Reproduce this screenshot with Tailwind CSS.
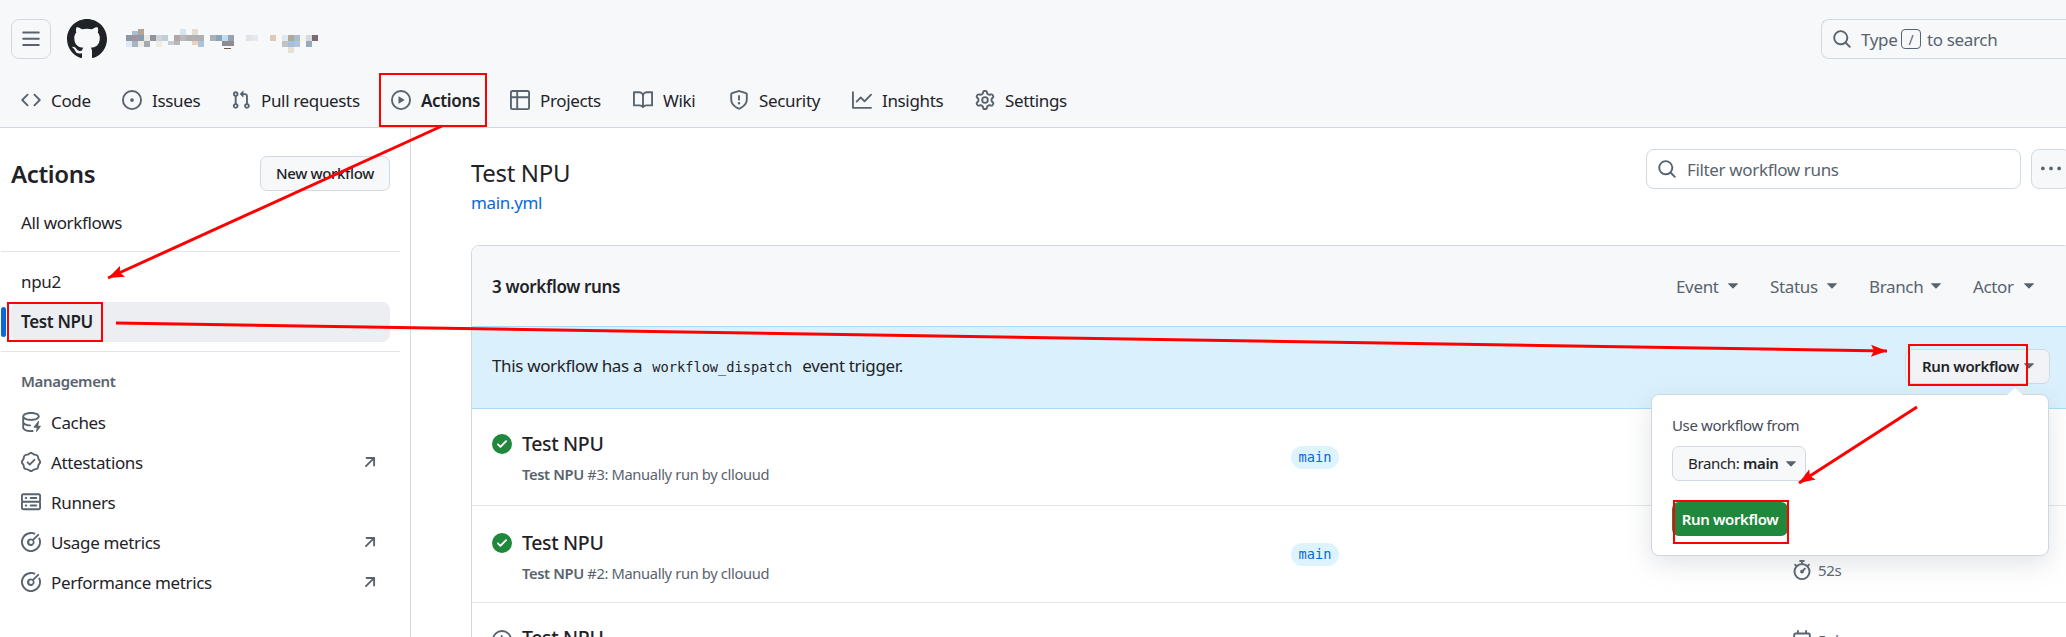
<!DOCTYPE html>
<html lang="en">
<head>
  <meta charset="UTF-8" />
  <title>Actions</title>
  <script src="https://cdn.jsdelivr.net/npm/@tailwindcss/browser@4"></script>
</head>
<body class="bg-white text-[#1f2328] font-['Noto_Sans',sans-serif] text-[17px] leading-[25px] tracking-[-0.35px]">
  <svg class="hidden">
    <symbol id="i-code" viewBox="0 0 16 16"><path d="m11.28 3.22 4.25 4.25a.75.75 0 0 1 0 1.06l-4.25 4.25a.749.749 0 0 1-1.275-.326.749.749 0 0 1 .215-.734L13.94 8l-3.72-3.72a.749.749 0 0 1 .326-1.275.749.749 0 0 1 .734.215Zm-6.56 0a.751.751 0 0 1 1.042.018.751.751 0 0 1 .018 1.042L2.06 8l3.72 3.72a.749.749 0 0 1-.326 1.275.749.749 0 0 1-.734-.215L.47 8.53a.75.75 0 0 1 0-1.06Z"/></symbol>
    <symbol id="i-issue" viewBox="0 0 16 16"><path d="M8 9.5a1.5 1.5 0 1 0 0-3 1.5 1.5 0 0 0 0 3Z"/><path d="M8 0a8 8 0 1 1 0 16A8 8 0 0 1 8 0ZM1.5 8a6.5 6.5 0 1 0 13 0 6.5 6.5 0 0 0-13 0Z"/></symbol>
    <symbol id="i-pr" viewBox="0 0 16 16"><path d="M1.5 3.25a2.25 2.25 0 1 1 3 2.122v5.256a2.251 2.251 0 1 1-1.5 0V5.372A2.25 2.25 0 0 1 1.5 3.25Zm5.677-.177L9.573.677A.25.25 0 0 1 10 .854V2.5h1A2.5 2.5 0 0 1 13.5 5v5.628a2.251 2.251 0 1 1-1.5 0V5a1 1 0 0 0-1-1h-1v1.646a.25.25 0 0 1-.427.177L7.177 3.427a.25.25 0 0 1 0-.354ZM3.75 2.5a.75.75 0 1 0 0 1.5.75.75 0 0 0 0-1.5Zm0 9.5a.75.75 0 1 0 0 1.5.75.75 0 0 0 0-1.5Zm8.25.75a.75.75 0 1 0 1.5 0 .75.75 0 0 0-1.5 0Z"/></symbol>
    <symbol id="i-play" viewBox="0 0 16 16"><path d="M8 0a8 8 0 1 1 0 16A8 8 0 0 1 8 0ZM1.5 8a6.5 6.5 0 1 0 13 0 6.5 6.5 0 0 0-13 0Zm4.879-2.773 4.264 2.559a.25.25 0 0 1 0 .428l-4.264 2.559A.25.25 0 0 1 6 10.559V5.442a.25.25 0 0 1 .379-.215Z"/></symbol>
    <symbol id="i-table" viewBox="0 0 16 16"><path d="M0 1.75C0 .784.784 0 1.75 0h12.5C15.216 0 16 .784 16 1.75v12.5A1.75 1.75 0 0 1 14.25 16H1.75A1.75 1.75 0 0 1 0 14.25ZM6.5 6.5v8h7.75a.25.25 0 0 0 .25-.25V6.5Zm8-1.5V1.75a.25.25 0 0 0-.25-.25H6.5V5Zm-13 1.5v7.75c0 .138.112.25.25.25H5v-8ZM5 5V1.5H1.75a.25.25 0 0 0-.25.25V5Z"/></symbol>
    <symbol id="i-book" viewBox="0 0 16 16"><path d="M0 1.75A.75.75 0 0 1 .75 1h4.253c1.227 0 2.317.59 3 1.501A3.743 3.743 0 0 1 11.006 1h4.245a.75.75 0 0 1 .75.75v10.5a.75.75 0 0 1-.75.75h-4.507a2.25 2.25 0 0 0-1.591.659l-.622.621a.75.75 0 0 1-1.06 0l-.622-.621A2.25 2.25 0 0 0 5.258 13H.75a.75.75 0 0 1-.75-.75Zm7.251 10.324.004-5.073-.002-2.253A2.25 2.25 0 0 0 5.003 2.5H1.5v9h3.757a3.75 3.75 0 0 1 1.994.574ZM8.755 4.75l-.004 7.322a3.752 3.752 0 0 1 1.992-.572H14.5v-9h-3.495a2.25 2.25 0 0 0-2.25 2.25Z"/></symbol>
    <symbol id="i-shield" viewBox="0 0 16 16"><path d="M7.467.133a1.748 1.748 0 0 1 1.066 0l5.25 1.68A1.75 1.75 0 0 1 15 3.48V7c0 1.566-.32 3.182-1.303 4.682-.983 1.498-2.585 2.813-5.032 3.855a1.697 1.697 0 0 1-1.33 0c-2.447-1.042-4.049-2.357-5.032-3.855C1.32 10.182 1 8.566 1 7V3.48a1.75 1.75 0 0 1 1.217-1.667Zm.61 1.429a.25.25 0 0 0-.153 0l-5.25 1.68a.25.25 0 0 0-.174.238V7c0 1.358.275 2.666 1.057 3.86.784 1.194 2.121 2.34 4.366 3.297a.196.196 0 0 0 .154 0c2.245-.956 3.582-2.104 4.366-3.298C13.225 9.666 13.5 8.36 13.5 7V3.48a.251.251 0 0 0-.174-.237l-5.25-1.68ZM8.75 4.75v3a.75.75 0 0 1-1.5 0v-3a.75.75 0 0 1 1.5 0ZM9 10.5a1 1 0 1 1-2 0 1 1 0 0 1 2 0Z"/></symbol>
    <symbol id="i-graph" viewBox="0 0 16 16"><path d="M1.5 1.75V13.5h13.75a.75.75 0 0 1 0 1.5H.75a.75.75 0 0 1-.75-.75V1.75a.75.75 0 0 1 1.5 0Zm14.28 2.53-5.25 5.25a.75.75 0 0 1-1.06 0L7 7.06 4.28 9.78a.751.751 0 0 1-1.042-.018.751.751 0 0 1-.018-1.042l3.25-3.25a.75.75 0 0 1 1.06 0L10 7.94l4.72-4.72a.751.751 0 0 1 1.042.018.751.751 0 0 1 .018 1.042Z"/></symbol>
    <symbol id="i-gear" viewBox="0 0 16 16"><path d="M8 0a8.2 8.2 0 0 1 .701.031C9.444.095 9.99.645 10.16 1.29l.288 1.107c.018.066.079.158.212.224.231.114.454.243.668.386.123.082.233.09.299.071l1.103-.303c.644-.176 1.392.021 1.82.63.27.385.506.792.704 1.218.315.675.111 1.422-.364 1.891l-.814.806c-.049.048-.098.147-.088.294.016.257.016.515 0 .772-.01.147.038.246.088.294l.814.806c.475.469.679 1.216.364 1.891a7.977 7.977 0 0 1-.704 1.217c-.428.61-1.176.807-1.82.63l-1.102-.302c-.067-.019-.177-.011-.3.071a5.909 5.909 0 0 1-.668.386c-.133.066-.194.158-.211.224l-.29 1.106c-.168.646-.715 1.196-1.458 1.26a8.006 8.006 0 0 1-1.402 0c-.743-.064-1.289-.614-1.458-1.26l-.289-1.106c-.018-.066-.079-.158-.212-.224a5.738 5.738 0 0 1-.668-.386c-.123-.082-.233-.09-.299-.071l-1.103.303c-.644.176-1.392-.021-1.82-.63a8.12 8.12 0 0 1-.704-1.218c-.315-.675-.111-1.422.363-1.891l.815-.806c.05-.048.098-.147.088-.294a6.214 6.214 0 0 1 0-.772c.01-.147-.038-.246-.088-.294l-.815-.806C.635 6.045.431 5.298.746 4.623a7.92 7.92 0 0 1 .704-1.217c.428-.61 1.176-.807 1.82-.63l1.102.302c.067.019.177.011.3-.071.214-.143.437-.272.668-.386.133-.066.194-.158.211-.224l.29-1.106C6.009.645 6.556.095 7.299.03 7.53.01 7.764 0 8 0Zm-.571 1.525c-.036.003-.108.036-.137.146l-.289 1.105c-.147.561-.549.967-.998 1.189-.173.086-.34.183-.5.29-.417.278-.97.423-1.529.27l-1.103-.303c-.109-.03-.175.016-.195.045-.22.312-.412.644-.573.99-.014.031-.021.11.059.19l.815.806c.411.406.562.957.53 1.456a4.709 4.709 0 0 0 0 .582c.032.499-.119 1.05-.53 1.456l-.815.806c-.081.08-.073.159-.059.19.162.346.353.677.573.989.02.03.085.076.195.046l1.102-.303c.56-.153 1.113-.008 1.53.27.161.107.328.204.501.29.447.222.85.629.997 1.189l.289 1.105c.029.109.101.143.137.146a6.6 6.6 0 0 0 1.142 0c.036-.003.108-.036.137-.146l.289-1.105c.147-.561.549-.967.998-1.189.173-.086.34-.183.5-.29.417-.278.97-.423 1.529-.27l1.103.303c.109.029.175-.016.195-.045.22-.313.411-.644.573-.99.014-.031.021-.11-.059-.19l-.815-.806c-.411-.406-.562-.957-.53-1.456a4.709 4.709 0 0 0 0-.582c-.032-.499.119-1.05.53-1.456l.815-.806c.081-.08.073-.159.059-.19a6.464 6.464 0 0 0-.573-.989c-.02-.03-.085-.076-.195-.046l-1.102.303c-.56.153-1.113.008-1.53-.27a4.44 4.44 0 0 0-.501-.29c-.447-.222-.85-.629-.997-1.189l-.289-1.105c-.029-.11-.101-.143-.137-.146a6.6 6.6 0 0 0-1.142 0ZM11 8a3 3 0 1 1-6 0 3 3 0 0 1 6 0ZM9.5 8a1.5 1.5 0 1 0-3.001.001A1.5 1.5 0 0 0 9.5 8Z"/></symbol>
    <symbol id="i-search" viewBox="0 0 16 16"><path d="M10.68 11.74a6 6 0 0 1-7.922-8.982 6 6 0 0 1 8.982 7.922l3.04 3.04a.749.749 0 0 1-.326 1.275.749.749 0 0 1-.734-.215ZM11.5 7a4.499 4.499 0 1 0-8.997 0A4.499 4.499 0 0 0 11.5 7Z"/></symbol>
    <symbol id="i-caret" viewBox="4.25 7 7.5 4"><path d="M4.427 7.427l3.396 3.396a.25.25 0 0 0 .354 0l3.396-3.396A.25.25 0 0 0 11.396 7H4.604a.25.25 0 0 0-.177.427Z"/></symbol>
    <symbol id="i-cache" viewBox="0 0 16 16"><path d="M2.5 5.724V8c0 .248.238.7 1.169 1.159.874.43 2.144.745 3.62.822a.75.75 0 1 1-.078 1.498c-1.622-.085-3.102-.432-4.204-.975a5.565 5.565 0 0 1-.507-.28V12.5c0 .133.058.318.282.551.227.237.591.483 1.101.707 1.015.447 2.47.742 4.117.742.406 0 .802-.018 1.183-.052a.751.751 0 1 1 .134 1.494C8.89 15.98 8.45 16 8 16c-1.805 0-3.475-.32-4.721-.869-.623-.274-1.173-.619-1.579-1.041-.408-.425-.7-.964-.7-1.59v-9c0-.626.292-1.165.7-1.591.406-.42.956-.766 1.579-1.04C4.525.32 6.195 0 8 0c1.806 0 3.476.32 4.721.869.623.274 1.173.619 1.579 1.041.408.425.7.964.7 1.59 0 .626-.292 1.165-.7 1.591-.406.42-.956.766-1.578 1.04C11.475 6.68 9.805 7 8 7c-1.805 0-3.475-.32-4.721-.869a6.15 6.15 0 0 1-.779-.407Zm0-2.224c0 .133.058.318.282.551.227.237.591.483 1.101.707C4.898 5.205 6.353 5.5 8 5.5c1.646 0 3.101-.295 4.118-.742.508-.224.873-.471 1.1-.708.224-.232.282-.417.282-.55 0-.133-.058-.318-.282-.551-.227-.237-.591-.483-1.101-.707C11.102 1.795 9.647 1.5 8 1.5c-1.646 0-3.101.295-4.118.742-.508.224-.873.471-1.1.708-.224.232-.282.417-.282.55Z"/><path d="M14.49 7.582a.375.375 0 0 0-.66-.313l-3.625 4.625a.375.375 0 0 0 .295.606h2.127l-.619 2.922a.375.375 0 0 0 .666.304l3.125-4.125A.375.375 0 0 0 15.5 11h-1.778l.769-3.418Z"/></symbol>
    <symbol id="i-verified" viewBox="0 0 16 16"><path d="m9.585.52.929.68c.153.112.331.186.518.215l1.138.175a2.678 2.678 0 0 1 2.24 2.24l.174 1.139c.029.187.103.365.215.518l.68.928a2.677 2.677 0 0 1 0 3.17l-.68.928a1.174 1.174 0 0 0-.215.518l-.175 1.138a2.678 2.678 0 0 1-2.241 2.241l-1.138.175a1.17 1.17 0 0 0-.518.215l-.928.68a2.677 2.677 0 0 1-3.17 0l-.928-.68a1.174 1.174 0 0 0-.518-.215L3.83 14.41a2.678 2.678 0 0 1-2.24-2.24l-.175-1.138a1.17 1.17 0 0 0-.215-.518l-.68-.928a2.677 2.677 0 0 1 0-3.17l.68-.928c.112-.153.186-.331.215-.518l.175-1.14a2.678 2.678 0 0 1 2.24-2.24l1.139-.175c.187-.029.365-.103.518-.215l.928-.68a2.677 2.677 0 0 1 3.17 0ZM7.303 1.728l-.927.68a2.67 2.67 0 0 1-1.18.489l-1.137.174a1.179 1.179 0 0 0-.987.987l-.174 1.136a2.677 2.677 0 0 1-.489 1.18l-.68.928a1.18 1.18 0 0 0 0 1.394l.68.927c.256.348.424.753.489 1.18l.174 1.137c.078.509.478.909.987.987l1.136.174a2.67 2.67 0 0 1 1.18.489l.928.68c.414.305.979.305 1.394 0l.927-.68a2.67 2.67 0 0 1 1.18-.489l1.137-.174a1.18 1.18 0 0 0 .987-.987l.174-1.136a2.67 2.67 0 0 1 .489-1.18l.68-.928a1.176 1.176 0 0 0 0-1.394l-.68-.927a2.686 2.686 0 0 1-.489-1.18l-.174-1.137a1.179 1.179 0 0 0-.987-.987l-1.136-.174a2.677 2.677 0 0 1-1.18-.489l-.928-.68a1.176 1.176 0 0 0-1.394 0ZM11.28 6.78l-3.75 3.75a.75.75 0 0 1-1.06 0L4.72 8.78a.751.751 0 0 1 .018-1.042.751.751 0 0 1 1.042-.018l1.22 1.22 3.22-3.22a.751.751 0 0 1 1.042.018.751.751 0 0 1 .018 1.042Z"/></symbol>
    <symbol id="i-server" viewBox="0 0 16 16"><path d="M1.75 1h12.5c.966 0 1.75.784 1.75 1.75v4c0 .372-.116.717-.314 1 .198.283.314.628.314 1v4a1.75 1.75 0 0 1-1.75 1.75H1.75A1.75 1.75 0 0 1 0 12.75v-4c0-.358.109-.707.314-1a1.739 1.739 0 0 1-.314-1v-4C0 1.784.784 1 1.75 1ZM1.5 2.75v4c0 .138.112.25.25.25h12.5a.25.25 0 0 0 .25-.25v-4a.25.25 0 0 0-.25-.25H1.75a.25.25 0 0 0-.25.25Zm.25 5.75a.25.25 0 0 0-.25.25v4c0 .138.112.25.25.25h12.5a.25.25 0 0 0 .25-.25v-4a.25.25 0 0 0-.25-.25ZM7 4.75A.75.75 0 0 1 7.75 4h4.5a.75.75 0 0 1 0 1.5h-4.5A.75.75 0 0 1 7 4.75ZM7.75 10h4.5a.75.75 0 0 1 0 1.5h-4.5a.75.75 0 0 1 0-1.5ZM3 4.75A.75.75 0 0 1 3.75 4h.5a.75.75 0 0 1 0 1.5h-.5A.75.75 0 0 1 3 4.75ZM3.75 10h.5a.75.75 0 0 1 0 1.5h-.5a.75.75 0 0 1 0-1.5Z"/></symbol>
    <symbol id="i-meter" viewBox="0 0 16 16"><path d="M8 1.5a6.5 6.5 0 1 0 6.016 4.035.75.75 0 0 1 1.388-.57 8 8 0 1 1-4.37-4.37.75.75 0 0 1-.569 1.388A6.48 6.48 0 0 0 8 1.5Zm6.28.22a.75.75 0 0 1 0 1.06l-3.914 3.914A3 3 0 1 1 9.305 5.634l3.915-3.914a.75.75 0 0 1 1.06 0ZM8 6.5a1.5 1.5 0 1 0 0 3 1.5 1.5 0 0 0 0-3Z"/></symbol>
    <symbol id="i-arrow" viewBox="0 0 16 16"><path d="M4.53 4.75A.75.75 0 0 1 5.28 4h6.01a.75.75 0 0 1 .75.75v6.01a.75.75 0 0 1-1.5 0v-4.2l-5.26 5.261a.749.749 0 0 1-1.275-.326.749.749 0 0 1 .215-.734L9.48 5.5h-4.2a.75.75 0 0 1-.75-.75Z"/></symbol>
    <symbol id="i-check" viewBox="0 0 16 16"><path d="M8 16A8 8 0 1 1 8 0a8 8 0 0 1 0 16Zm3.78-9.72a.751.751 0 0 0-.018-1.042.751.751 0 0 0-1.042-.018L6.75 9.19 5.28 7.72a.751.751 0 0 0-1.042.018.751.751 0 0 0-.018 1.042l2 2a.75.75 0 0 0 1.06 0Z"/></symbol>
    <symbol id="i-watch" viewBox="0 0 16 16"><path d="M5.75.75A.75.75 0 0 1 6.5 0h3a.75.75 0 0 1 0 1.5h-.75v1l-.001.041a6.724 6.724 0 0 1 3.464 1.435l.007-.006.75-.75a.749.749 0 0 1 1.275.326.749.749 0 0 1-.215.734l-.75.75-.006.007a6.75 6.75 0 1 1-10.548 0L2.72 5.03l-.75-.75a.751.751 0 0 1 .018-1.042.751.751 0 0 1 1.042-.018l.75.75.007.006A6.72 6.72 0 0 1 7.25 2.541V1.5H6.5a.75.75 0 0 1-.75-.75ZM8 14.5a5.25 5.25 0 1 0-.001-10.501A5.25 5.25 0 0 0 8 14.5Zm.389-6.7 1.33-1.33a.75.75 0 1 1 1.061 1.06L9.45 8.861A1.503 1.503 0 0 1 8 10.75a1.499 1.499 0 1 1 .389-2.95Z"/></symbol>
    <symbol id="i-calendar" viewBox="0 0 16 16"><path d="M4.75 0a.75.75 0 0 1 .75.75V2h5V.75a.75.75 0 0 1 1.5 0V2h1.25c.966 0 1.75.784 1.75 1.75v10.5A1.75 1.75 0 0 1 13.25 16H2.75A1.75 1.75 0 0 1 1 14.25V3.75C1 2.784 1.784 2 2.75 2H4V.75A.75.75 0 0 1 4.75 0ZM2.5 7.5v6.75c0 .138.112.25.25.25h10.5a.25.25 0 0 0 .25-.25V7.5Zm10.75-4H2.75a.25.25 0 0 0-.25.25V6h11V3.75a.25.25 0 0 0-.25-.25Z"/></symbol>
    <symbol id="i-clock" viewBox="0 0 16 16"><path d="M8 0a8 8 0 1 1 0 16A8 8 0 0 1 8 0ZM1.5 8a6.5 6.5 0 1 0 13 0 6.5 6.5 0 0 0-13 0Zm7-3.25v2.992l2.028.812a.75.75 0 0 1-.557 1.392l-2.5-1A.751.751 0 0 1 7 8.25v-3.5a.75.75 0 0 1 1.5 0Z"/></symbol>
  </svg>

  <div class="relative w-[2066px] h-[637px] overflow-hidden">
    <header class="h-[128px] bg-[#f6f8fa] border-b border-[#d0d7de]">
      <div class="h-[78px] flex items-center pl-[11px]">
        <button class="w-[40px] h-[40px] flex items-center justify-center rounded-[8px] border border-[#d1d9e0] text-[#59636e]">
          <svg class="w-[20px] h-[20px] fill-current" viewBox="0 0 16 16"><path d="M1 2.75A.75.75 0 0 1 1.75 2h12.5a.75.75 0 0 1 0 1.5H1.75A.75.75 0 0 1 1 2.75Zm0 5A.75.75 0 0 1 1.75 7h12.5a.75.75 0 0 1 0 1.5H1.75A.75.75 0 0 1 1 7.75ZM1.75 12h12.5a.75.75 0 0 1 0 1.5H1.75a.75.75 0 0 1 0-1.5Z"/></svg>
        </button>
        <svg class="w-[40px] h-[40px] ml-[16px] fill-[#1f2328]" viewBox="0 0 16 16"><path d="M8 0c4.42 0 8 3.58 8 8a8.013 8.013 0 0 1-5.45 7.59c-.4.08-.55-.17-.55-.38 0-.27.01-1.13.01-2.2 0-.75-.25-1.23-.54-1.48 1.78-.2 3.65-.88 3.65-3.95 0-.88-.31-1.59-.82-2.15.08-.2.36-1.02-.08-2.12 0 0-.67-.22-2.2.82-.64-.18-1.32-.27-2-.27-.68 0-1.36.09-2 .27-1.53-1.03-2.2-.82-2.2-.82-.44 1.1-.16 1.92-.08 2.12-.51.56-.82 1.28-.82 2.15 0 3.06 1.86 3.75 3.64 3.95-.23.2-.44.55-.51 1.07-.46.21-1.61.55-2.33-.66-.15-.24-.6-.83-1.23-.82-.67.01-.27.38.01.53.34.19.73.9.82 1.13.16.45.68 1.31 2.69.94 0 .67.01 1.3.01 1.49 0 .21-.15.45-.55.38A7.995 7.995 0 0 1 0 8c0-4.42 3.58-8 8-8Z"/></svg>
        <!-- blurred repo name -->
        <svg class="w-[205px] h-[40px] ml-[13px]" viewBox="0 0 615 120" shape-rendering="crispEdges">
          <g>
            <rect x="36" y="36" width="18" height="12" fill="#a9bdd6"/><rect x="54" y="30" width="18" height="18" fill="#b3a594"/><rect x="180" y="30" width="18" height="18" fill="#d6e4f1"/><rect x="216" y="30" width="18" height="18" fill="#e3dfd0"/>
            <rect x="18" y="48" width="18" height="18" fill="#8f96a4"/><rect x="36" y="48" width="18" height="18" fill="#a0959c"/><rect x="54" y="48" width="18" height="18" fill="#8a9cb3"/><rect x="72" y="48" width="18" height="18" fill="#ece9e4"/><rect x="90" y="48" width="18" height="18" fill="#8d949c"/><rect x="108" y="48" width="18" height="18" fill="#cfd5dc"/><rect x="126" y="48" width="18" height="18" fill="#bcd0dc"/><rect x="162" y="48" width="18" height="18" fill="#b3a8a8"/><rect x="180" y="48" width="18" height="18" fill="#bfb8b8"/><rect x="198" y="48" width="54" height="18" fill="#b0b0b2"/><rect x="270" y="48" width="18" height="18" fill="#a9b2b8"/><rect x="288" y="48" width="18" height="18" fill="#8fa3b8"/><rect x="306" y="48" width="18" height="18" fill="#bfdcf2"/><rect x="324" y="48" width="18" height="18" fill="#9aa3ad"/><rect x="378" y="48" width="18" height="18" fill="#e0e3e8"/><rect x="396" y="48" width="18" height="18" fill="#e6e8ec"/><rect x="450" y="48" width="18" height="18" fill="#e3c9b0"/><rect x="486" y="48" width="18" height="18" fill="#e0e8f0"/><rect x="504" y="48" width="18" height="18" fill="#b0a898"/><rect x="522" y="48" width="18" height="18" fill="#a8bdd0"/><rect x="540" y="48" width="18" height="18" fill="#f2f4f0"/><rect x="558" y="48" width="18" height="18" fill="#d8dadf"/><rect x="576" y="48" width="18" height="18" fill="#7d6a70"/>
            <rect x="18" y="66" width="18" height="18" fill="#e0e8f3"/><rect x="36" y="66" width="18" height="18" fill="#a5b4c4"/><rect x="54" y="66" width="18" height="18" fill="#f0ebe4"/><rect x="72" y="66" width="18" height="18" fill="#a5a9b2"/><rect x="108" y="66" width="18" height="18" fill="#f1ece0"/><rect x="144" y="66" width="18" height="12" fill="#c8ccd0"/><rect x="162" y="66" width="18" height="12" fill="#b5b8c0"/><rect x="216" y="66" width="18" height="12" fill="#ecd0b8"/><rect x="234" y="66" width="18" height="18" fill="#aec2e0"/><rect x="306" y="66" width="36" height="14" fill="#8d8d90"/><rect x="486" y="66" width="18" height="18" fill="#c0c2c4"/><rect x="504" y="66" width="18" height="18" fill="#a8c0e0"/><rect x="522" y="66" width="18" height="18" fill="#b0c6d8"/><rect x="558" y="66" width="18" height="18" fill="#98aabb"/>
            <rect x="504" y="84" width="18" height="18" fill="#e8e0d4"/><rect x="312" y="86" width="20" height="4" fill="#7a5a3a"/>
          </g>
        </svg>
        <div class="ml-auto w-[245px] h-[40px] rounded-l-[8px] border border-r-0 border-[#d1d9e0] flex items-center pl-[10px] text-[#59636e]">
          <svg class="w-[20px] h-[20px] fill-current"><use href="#i-search"/></svg>
          <span class="ml-[9px] w-[36px]">Type</span>
          <span class="ml-[4px] mr-[6px] w-[20px] h-[20px] rounded-[4px] border border-[#59636e] flex items-center justify-center text-[14px]">/</span>
          <span>to search</span>
        </div>
      </div>
      <nav class="h-[44px] flex items-center pl-[21px] text-[#1f2328]">
        <a class="flex items-center gap-[10px] w-[101px]"><svg class="w-[20px] h-[20px] fill-[#59636e]"><use href="#i-code"/></svg>Code</a>
        <a class="flex items-center gap-[10px] w-[109px]"><svg class="w-[20px] h-[20px] fill-[#59636e]"><use href="#i-issue"/></svg>Issues</a>
        <a class="flex items-center gap-[10px] w-[160px]"><svg class="w-[20px] h-[20px] fill-[#59636e]"><use href="#i-pr"/></svg>Pull requests</a>
        <a class="flex items-center gap-[10px] w-[119px] font-semibold"><svg class="w-[20px] h-[20px] fill-[#59636e]"><use href="#i-play"/></svg>Actions</a>
        <a class="flex items-center gap-[10px] w-[123px]"><svg class="w-[20px] h-[20px] fill-[#59636e]"><use href="#i-table"/></svg>Projects</a>
        <a class="flex items-center gap-[10px] w-[96px]"><svg class="w-[20px] h-[20px] fill-[#59636e]"><use href="#i-book"/></svg>Wiki</a>
        <a class="flex items-center gap-[10px] w-[123px]"><svg class="w-[20px] h-[20px] fill-[#59636e]"><use href="#i-shield"/></svg>Security</a>
        <a class="flex items-center gap-[10px] w-[123px]"><svg class="w-[20px] h-[20px] fill-[#59636e]"><use href="#i-graph"/></svg>Insights</a>
        <a class="flex items-center gap-[10px]"><svg class="w-[20px] h-[20px] fill-[#59636e]"><use href="#i-gear"/></svg>Settings</a>
      </nav>
    </header>

    <div class="flex">
      <aside class="w-[411px] h-[509px] shrink-0 border-r border-[#d0d7de] pt-[28px]">
        <div class="flex items-center justify-between pl-[11px] pr-[20px] h-[35px]">
          <h2 class="text-[24px] font-semibold">Actions</h2>
          <button class="w-[130px] h-[35px] rounded-[7px] border border-[#d1d9e0] bg-[#f6f8fa] text-[15px] font-medium">New workflow</button>
        </div>
        <div class="h-[40px] mt-[12px] pl-[21px] pb-[2px] flex items-center">All workflows</div>
        <div class="h-px w-[399px] ml-px mt-[8px] bg-[#e1e4e8]"></div>
        <div class="h-[40px] mt-[10px] pl-[21px] pb-[2px] flex items-center">npu2</div>
        <div class="relative h-[40px] w-[379px] ml-[11px] pl-[10px] pb-[1px] flex items-center rounded-[8px] bg-[#eceef1] font-semibold">
          Test NPU
          <span class="absolute left-[-10px] top-[5px] w-[5px] h-[30px] rounded-[3px] bg-[#0969da]"></span>
        </div>
        <div class="h-px w-[399px] ml-px mt-[9px] bg-[#e1e4e8]"></div>
        <div class="h-[20px] mt-[19px] pl-[21px] flex items-center text-[15px] font-semibold text-[#59636e]">Management</div>
        <ul class="mt-[11px] pl-[21px] pr-[30px]">
          <li class="h-[40px] flex items-center gap-[10px]"><svg class="w-[20px] h-[20px] fill-[#59636e]"><use href="#i-cache"/></svg>Caches</li>
          <li class="h-[40px] flex items-center gap-[10px]"><svg class="w-[20px] h-[20px] fill-[#59636e]"><use href="#i-verified"/></svg>Attestations<svg class="w-[20px] h-[20px] ml-auto fill-[#59636e]"><use href="#i-arrow"/></svg></li>
          <li class="h-[40px] flex items-center gap-[10px]"><svg class="w-[20px] h-[20px] fill-[#59636e]"><use href="#i-server"/></svg>Runners</li>
          <li class="h-[40px] flex items-center gap-[10px]"><svg class="w-[20px] h-[20px] fill-[#59636e]"><use href="#i-meter"/></svg>Usage metrics<svg class="w-[20px] h-[20px] ml-auto fill-[#59636e]"><use href="#i-arrow"/></svg></li>
          <li class="h-[40px] flex items-center gap-[10px]"><svg class="w-[20px] h-[20px] fill-[#59636e]"><use href="#i-meter"/></svg>Performance metrics<svg class="w-[20px] h-[20px] ml-auto fill-[#59636e]"><use href="#i-arrow"/></svg></li>
        </ul>
      </aside>

      <main class="w-[1660px] shrink-0 pl-[60px]">
        <div class="h-[117px] flex justify-between">
          <div class="pt-[30px]">
            <h1 class="text-[24px] leading-[30px]">Test NPU</h1>
            <a class="block mt-[3px] leading-[24px] text-[#0969da]">main.yml</a>
          </div>
          <div class="flex gap-[10px] pt-[21px]">
            <div class="w-[375px] h-[40px] rounded-[8px] border border-[#d1d9e0] flex items-center pl-[10px] text-[#59636e]">
              <svg class="w-[20px] h-[20px] fill-current"><use href="#i-search"/></svg>
              <span class="ml-[10px]">Filter workflow runs</span>
            </div>
            <button class="w-[40px] h-[40px] rounded-[8px] border border-[#d1d9e0] bg-[#f6f8fa] flex items-center justify-center">
              <svg class="w-[20px] h-[20px] fill-[#59636e]" viewBox="0 0 16 16"><path d="M8 9a1.5 1.5 0 1 0 0-3 1.5 1.5 0 0 0 0 3ZM1.5 9a1.5 1.5 0 1 0 0-3 1.5 1.5 0 0 0 0 3Zm13 0a1.5 1.5 0 1 0 0-3 1.5 1.5 0 0 0 0 3Z"/></svg>
            </button>
          </div>
        </div>

        <section class="border border-[#d0d7de] rounded-t-[8px] overflow-hidden">
          <div class="h-[80px] bg-[#f6f8fa] flex items-center pl-[20px] pr-[36px]">
            <strong class="font-semibold">3 workflow runs</strong>
            <div class="ml-auto flex gap-[32px] text-[#59636e]">
              <span class="w-[62px] flex items-center justify-between">Event<svg class="w-[10px] h-[6px] fill-current"><use href="#i-caret"/></svg></span>
              <span class="w-[67px] flex items-center justify-between">Status<svg class="w-[10px] h-[6px] fill-current"><use href="#i-caret"/></svg></span>
              <span class="w-[72px] flex items-center justify-between">Branch<svg class="w-[10px] h-[6px] fill-current"><use href="#i-caret"/></svg></span>
              <span class="w-[61px] flex items-center justify-between">Actor<svg class="w-[10px] h-[6px] fill-current"><use href="#i-caret"/></svg></span>
            </div>
          </div>
          <div class="h-[83px] flex items-center pl-[20px] pr-[20px] pb-[3px] bg-[#daf1fd] border-y border-[#a8dcfb]">
            <p>This workflow has a <code class="mx-[6px] font-['DejaVu_Sans_Mono',monospace] text-[13.7px] tracking-normal">workflow_dispatch</code> event trigger.</p>
            <button class="ml-auto w-[145px] h-[35px] flex items-center justify-between pl-[16px] pr-[15px] rounded-[7px] border border-[#d1d9e0] bg-[#f1f3f6] text-[15px] font-semibold">
              Run workflow
              <svg class="w-[10px] h-[6px] fill-[#59636e]"><use href="#i-caret"/></svg>
            </button>
          </div>

          <div class="h-[97px] flex items-center border-b border-[#e1e4e8] pl-[20px]">
            <div class="w-[799px] flex items-start gap-[10px]">
              <svg class="w-[20px] h-[20px] mt-[3px] fill-[#1f883d]"><use href="#i-check"/></svg>
              <div>
                <div class="text-[19.5px] leading-[25px] font-medium">Test NPU</div>
                <div class="mt-[8px] text-[14.7px] leading-[20px] text-[#59636e]"><span class="font-semibold">Test NPU</span> #3: Manually run by cllouud</div>
              </div>
            </div>
            <span class="h-[23px] w-[48px] rounded-[12px] bg-[#ddf4ff] text-[#0969da] font-['DejaVu_Sans_Mono',monospace] text-[13.7px] tracking-normal leading-[23px] text-center">main</span>
          </div>
          <div class="h-[97px] flex border-b border-[#e1e4e8] pl-[20px]">
            <div class="w-[799px] pt-[24px] flex items-start gap-[10px]">
              <svg class="w-[20px] h-[20px] mt-[3px] fill-[#1f883d]"><use href="#i-check"/></svg>
              <div>
                <div class="text-[19.5px] leading-[25px] font-medium">Test NPU</div>
                <div class="mt-[8px] text-[14.7px] leading-[20px] text-[#59636e]"><span class="font-semibold">Test NPU</span> #2: Manually run by cllouud</div>
              </div>
            </div>
            <span class="self-center h-[23px] w-[48px] rounded-[12px] bg-[#ddf4ff] text-[#0969da] font-['DejaVu_Sans_Mono',monospace] text-[13.7px] tracking-normal leading-[23px] text-center">main</span>
            <div class="ml-[453px] self-start pt-[54px] flex items-center gap-[6px] text-[15px] leading-[20px] text-[#59636e]">
              <svg class="w-[20px] h-[20px] fill-current"><use href="#i-watch"/></svg>52s
            </div>
          </div>
          <div class="h-[97px] flex border-b border-[#e1e4e8] pl-[20px] pt-[27px]">
            <div class="w-[1300px] flex items-start gap-[10px]">
              <svg class="w-[20px] h-[20px] fill-[#59636e]"><use href="#i-clock"/></svg>
              <div class="text-[19.5px] leading-[25px] font-medium mt-[-5px]">Test NPU</div>
            </div>
            <div class="flex items-center h-[20px] gap-[6px] text-[15px] leading-[20px] text-[#59636e]">
              <svg class="w-[20px] h-[20px] fill-current"><use href="#i-calendar"/></svg>5 days ago
            </div>
          </div>
        </section>
      </main>
    </div>

    <!-- run workflow popover -->
    <div class="absolute left-[1651px] top-[394px] w-[398px] h-[162px] rounded-[8px] border border-[#d0d7de] bg-white shadow-[0_8px_24px_rgba(140,149,159,0.25)] pl-[20px] pt-[19px]">
      <span class="absolute right-[25px] top-[-7px] w-0 h-0 border-x-[8px] border-x-transparent border-b-[7px] border-b-white"></span>
      <div class="text-[15px] leading-[22px] text-[#444c56]">Use workflow from</div>
      <button class="mt-[10px] w-[134px] h-[35px] pl-[15px] flex items-center rounded-[7px] border border-[#d1d9e0] bg-[#f6f8fa] text-[15px] text-[#1f2328]">Branch:&nbsp;<span class="font-semibold">main</span><svg class="w-[10px] h-[6px] ml-[7px] fill-[#59636e]"><use href="#i-caret"/></svg></button>
      <button class="block mt-[21px] w-[116px] h-[34px] rounded-[7px] bg-[#1f883d] text-white text-[15px] font-semibold">Run workflow</button>
    </div>

    <!-- annotations drawn on the screenshot -->
    <svg class="absolute left-0 top-0 w-[2066px] h-[637px] pointer-events-none" viewBox="0 0 2066 637" fill="none">
      <defs>
        <marker id="head" markerUnits="userSpaceOnUse" markerWidth="17" markerHeight="13" refX="16" refY="6.5" orient="auto"><path d="M0 0.5 L16 6.5 L0 12.5 L3 6.5 Z" fill="#ff0000"/></marker>
      </defs>
      <g stroke="#ff0000" stroke-width="2">
        <rect x="380" y="74" width="106" height="52"/>
        <rect x="8" y="303" width="94" height="38"/>
        <rect x="1909" y="345" width="118" height="40"/>
        <rect x="1674" y="501" width="114" height="42"/>
      </g>
      <g stroke="#ff0000" stroke-width="3">
        <line x1="442" y1="126" x2="108" y2="278" marker-end="url(#head)"/>
        <line x1="116" y1="323" x2="1887" y2="351" marker-end="url(#head)"/>
        <line x1="1917" y1="407" x2="1799" y2="483" marker-end="url(#head)"/>
      </g>
    </svg>
  </div>
</body>
</html>
